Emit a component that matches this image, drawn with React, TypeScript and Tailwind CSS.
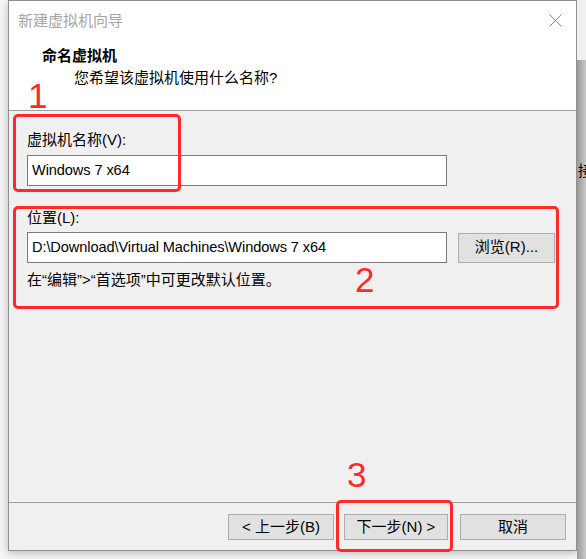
import React from 'react';

const font = { fontFamily: '"Liberation Sans", "Noto Sans CJK SC", sans-serif' };

function WinButton({ label, className = '' }: { label: string; className?: string }) {
  return (
    <div
      className={`h-[26px] flex items-center justify-center bg-[#e1e1e1] border border-[#adadad] text-[15px] text-black ${className}`}
    >
      {label}
    </div>
  );
}

function TextBox({ value }: { value: string }) {
  return (
    <div className="w-[420px] h-[31px] bg-white border border-[#7a7a7a] flex items-center pl-[4px] text-[14.6px] tracking-[-0.1px] text-black">
      {value}
    </div>
  );
}

export default function App() {
  return (
    <div className="relative w-[586px] h-[559px] flex overflow-hidden bg-[#f6f6f6]" style={font}>
      <div className="w-[8px] shrink-0" />

      {/* 向导对话框 */}
      <div className="w-[569px] h-[551px] shrink-0 flex flex-col border border-[#8f8f8f] shadow-[0_2px_8px_rgba(0,0,0,0.25)] bg-[#f0f0f0]">
        {/* 头部 */}
        <div className="h-[110px] shrink-0 bg-white border-b border-[#a0a0a0]">
          <div className="flex items-center justify-between h-[20px] mt-[10px] pl-[9px] pr-[14px]">
            <span className="text-[15px] text-[#a5a5a5] leading-[20px]">新建虚拟机向导</span>
            <svg width="13" height="13" viewBox="0 0 13 13" className="mt-[-2px]">
              <path d="M0.5 0.5 L12.5 12.5 M12.5 0.5 L0.5 12.5" stroke="#8a8a8a" strokeWidth="1" />
            </svg>
          </div>
          <div className="mt-[15px] pl-[33px] text-[15px] font-bold leading-[20px] text-black">命名虚拟机</div>
          <div className="mt-[2px] pl-[65px] text-[15px] leading-[20px] text-black">您希望该虚拟机使用什么名称?</div>
        </div>

        {/* 内容 */}
        <div className="h-[392px] shrink-0 border-b border-[#a0a0a0] pl-[18px] pt-[19px] flex flex-col">
          <div className="text-[15px] leading-[20px] text-black">虚拟机名称(V):</div>
          <div className="mt-[5px]">
            <TextBox value="Windows 7 x64" />
          </div>
          <div className="mt-[22px] text-[15px] leading-[20px] text-black">位置(L):</div>
          <div className="mt-[4px] flex items-center gap-[11px]">
            <TextBox value="D:\Download\Virtual Machines\Windows 7 x64" />
            <WinButton label="浏览(R)..." className="w-[97px] h-[30px]" />
          </div>
          <div className="mt-[7px] text-[15px] leading-[20px] text-black">在“编辑”&gt;“首选项”中可更改默认位置。</div>
        </div>

        {/* 底部按钮 */}
        <div className="flex-1 flex justify-end items-start pt-[11px] pr-[10px]">
          <WinButton label="< 上一步(B)" className="w-[106px]" />
          <WinButton label="下一步(N) >" className="w-[104px] ml-[10px]" />
          <WinButton label="取消" className="w-[106px] ml-[12px]" />
        </div>
      </div>

      {/* 背后的窗口 */}
      <div className="flex-1 flex flex-col">
        <div className="h-[60px] bg-[#f0f0f0]" />
        <div className="flex-1 bg-gradient-to-r from-[#9a9a9a] via-[#c4c4c4] to-[#cfcfcf] pt-[100px]">
          <span className="block pl-[1px] text-[15px] text-black whitespace-nowrap">接</span>
        </div>
      </div>

      {/* 红色标注 */}
      <div className="absolute left-[13px] top-[114px] w-[168px] h-[78px] border-[3px] border-[#ff2a2a] rounded-[5px]" />
      <div className="absolute left-[13px] top-[206px] w-[546px] h-[103px] border-[3px] border-[#ff2a2a] rounded-[5px]" />
      <div className="absolute left-[336px] top-[500px] w-[117px] h-[52px] border-[3px] border-[#ff2a2a] rounded-[5px]" />
      <span className="absolute left-[28px] top-[76px] text-[35px] leading-[40px] text-[#ff2a2a]">1</span>
      <span className="absolute left-[355px] top-[260px] text-[35px] leading-[40px] text-[#ff2a2a]">2</span>
      <span className="absolute left-[347px] top-[455px] text-[35px] leading-[40px] text-[#ff2a2a]">3</span>
    </div>
  );
}
